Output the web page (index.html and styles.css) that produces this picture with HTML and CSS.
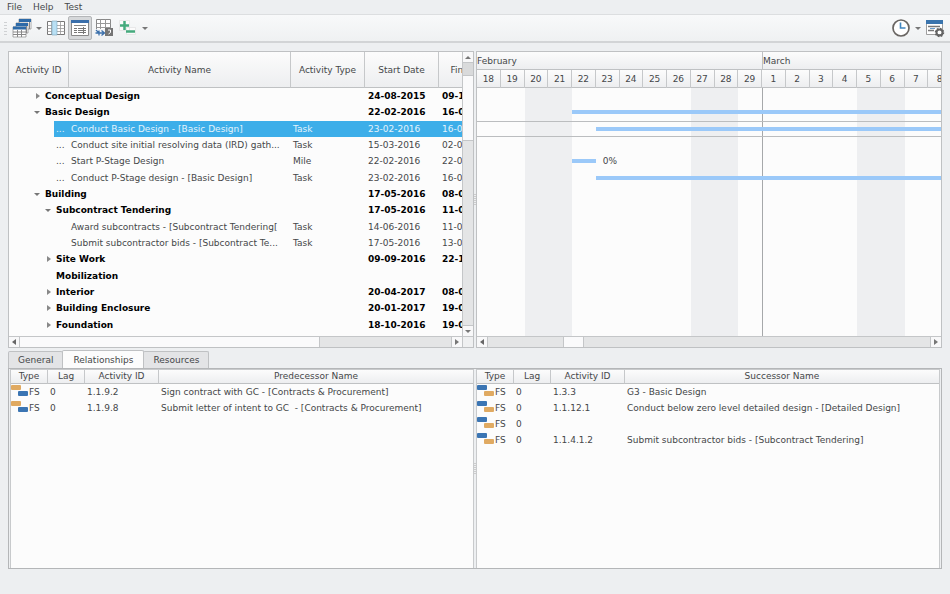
FILE: index.html
```
<!DOCTYPE html>
<html lang="en">
<head>
<meta charset="utf-8">
<title>Project schedule</title>
<link rel="stylesheet" href="styles.css">
</head>
<body>
<nav class="menubar">
  <button>File</button><button>Help</button><button>Test</button>
</nav>
<div class="toolbar">
  <span class="grip"></span>
  <button class="tool" aria-label="Windows">
    <svg width="20" height="20" viewBox="0 0 20 20"><g stroke="#777" stroke-width=".6" fill="#fff"><path d="M7 1h12v10H7z"/><path d="M4 5h12v10H4z"/><path d="M1 9h13v10H1z"/></g><path d="M7 1h12v3H7zM4 5h12v3H4zM1 8.500h13v3H1z" fill="#2d6aa8"/><path d="M1 14h13M1 16.500h13M5.500 12v7M9.500 12v7M17.500 4v7M14.500 8v7" stroke="#888" fill="none"/></svg>
  </button>
  <button class="drop" aria-label="Windows menu"><i class="down"></i></button>
  <button class="tool" aria-label="Columns">
    <svg width="20" height="20" viewBox="0 0 20 20"><path d="M1.500 3.500h17v13h-17z" fill="#fff" stroke="#777"/><path d="M1.500 7.500h17M1.500 10.500h17M1.500 13.500h17M5.500 3.500v13M14.500 3.500v13" stroke="#999" stroke-width=".8"/><path d="M6 3h5v14H6z" fill="#b9e0f4" stroke="#7ba6bd" stroke-width=".6"/></svg>
  </button>
  <button class="tool pressed" aria-label="Details">
    <svg width="20" height="20" viewBox="0 0 20 20"><path d="M1.500 2.500h17v15h-17z" fill="#fff" stroke="#888"/><path d="M1 2h18v3H1z" fill="#3a6fab"/><path d="M4 7.500h12" stroke="#888"/><path d="M4 10.500h3M4 12.500h3M4 14.500h3M8 10.500h8M8 12.500h8M8 14.500h8" stroke="#777"/><path d="M13.500 9v7" stroke="#777"/></svg>
  </button>
  <button class="tool" aria-label="Table options">
    <svg width="20" height="20" viewBox="0 0 20 20"><path d="M2.500 1.500h14v12h-14z" fill="#fff" stroke="#888"/><path d="M2.500 5.500h14M2.500 9.500h14M6.500 1.500v12M11.500 1.500v12" stroke="#999"/><path d="M1 11h11v7H1z" fill="#f4f5f6"/><path d="M2 12l3 3H1.500M5 12.500v5M5 15h5M7.500 12.500l3 2.500-3 2.500" stroke="#3a6fab" stroke-width="1.300" fill="none"/><path d="M11 10h8v8h-8z" fill="#757575"/><path d="M14 12h2.500v2.500L14.500 16" stroke="#fff" fill="none"/></svg>
  </button>
  <button class="tool" aria-label="Add or remove">
    <svg width="20" height="20" viewBox="0 0 20 20"><path d="M1.500 2.500h10v10h-10zM8.500 9.500h9v7h-9z" fill="#fbfbfb" stroke="#ddd" stroke-width=".6"/><path d="M2 7.500h9M6.500 3v9M8 13.500h9" stroke="#45aa7d" stroke-width="2.500"/></svg>
  </button>
  <button class="drop" aria-label="Add menu"><i class="down"></i></button>
  <span class="spring"></span>
  <button class="tool" aria-label="Time">
    <svg width="20" height="20" viewBox="0 0 20 20"><circle cx="10" cy="10" r="8" fill="#fff" stroke="#696562" stroke-width="1.700"/><path d="M9.500 4.500v5.500h5" stroke="#4187c0" stroke-width="1.600" fill="none"/></svg>
  </button>
  <button class="drop" aria-label="Time menu"><i class="down"></i></button>
  <button class="tool" aria-label="View settings">
    <svg width="20" height="20" viewBox="0 0 20 20"><path d="M1.500 2.500h16v14h-16z" fill="#fff" stroke="#888" stroke-width=".8"/><path d="M1 2h17v4H1z" fill="#3a74ad"/><path d="M3 8.500h12M3 12.500h6" stroke="#777" stroke-width="1.400"/><path d="M5 10.500h5" stroke="#6a9ccb"/><circle cx="14.500" cy="14.500" r="3" fill="none" stroke="#646464" stroke-width="2"/><circle cx="14.500" cy="14.500" r="4" fill="none" stroke="#646464" stroke-width="1.500" stroke-dasharray="1.600 1.540"/></svg>
  </button>
</div>

<main>
<section class="split top">
  <div class="pane">
    <div class="view">
      <div class="clip">
        <table class="tree">
          <colgroup><col class="c-id"><col class="c-name"><col class="c-std"><col class="c-std"><col class="c-std"></colgroup>
          <thead><tr><th>Activity ID</th><th>Activity Name</th><th>Activity Type</th><th>Start Date</th><th>Finish Date</th></tr></thead>
          <tbody>
            <tr class="group"><td colspan="2"><i class="right"></i>Conceptual Design</td><td></td><td>24-08-2015</td><td>09-10-2017</td></tr>
            <tr class="group"><td colspan="2"><i class="down"></i>Basic Design</td><td></td><td>22-02-2016</td><td>16-05-2016</td></tr>
            <tr class="selected"><td class="id">...</td><td>Conduct Basic Design - [Basic Design]</td><td>Task</td><td>23-02-2016</td><td>16-05-2016</td></tr>
            <tr><td class="id">...</td><td>Conduct site initial resolving data (IRD) gath...</td><td>Task</td><td>15-03-2016</td><td>02-05-2016</td></tr>
            <tr><td class="id">...</td><td>Start P-Stage Design</td><td>Mile</td><td>22-02-2016</td><td>22-02-2016</td></tr>
            <tr><td class="id">...</td><td>Conduct P-Stage design - [Basic Design]</td><td>Task</td><td>23-02-2016</td><td>16-05-2016</td></tr>
            <tr class="group"><td colspan="2"><i class="down"></i>Building</td><td></td><td>17-05-2016</td><td>08-05-2017</td></tr>
            <tr class="group sub"><td colspan="2"><i class="down"></i>Subcontract Tendering</td><td></td><td>17-05-2016</td><td>11-07-2016</td></tr>
            <tr><td class="id"></td><td>Award subcontracts - [Subcontract Tendering[</td><td>Task</td><td>14-06-2016</td><td>11-07-2016</td></tr>
            <tr><td class="id"></td><td>Submit subcontractor bids - [Subcontract Te...</td><td>Task</td><td>17-05-2016</td><td>13-06-2016</td></tr>
            <tr class="group sub"><td colspan="2"><i class="right"></i>Site Work</td><td></td><td>09-09-2016</td><td>22-11-2016</td></tr>
            <tr class="group sub"><td colspan="2"><i class="none"></i>Mobilization</td><td></td><td></td><td></td></tr>
            <tr class="group sub"><td colspan="2"><i class="right"></i>Interior</td><td></td><td>20-04-2017</td><td>08-09-2017</td></tr>
            <tr class="group sub"><td colspan="2"><i class="right"></i>Building Enclosure</td><td></td><td>20-01-2017</td><td>19-04-2017</td></tr>
            <tr class="group sub"><td colspan="2"><i class="right"></i>Foundation</td><td></td><td>18-10-2016</td><td>19-01-2017</td></tr>
          </tbody>
        </table>
      </div>
      <div class="vbar"><button aria-label="Scroll up"><i class="up"></i></button><span class="vgap"></span><span class="vthumb"></span><span class="spring"></span><button aria-label="Scroll down"><i class="down"></i></button></div>
    </div>
    <div class="hbar"><button aria-label="Scroll left"><i class="left"></i></button><span class="thumb tree-thumb"></span><span class="spring"></span><button aria-label="Scroll right"><i class="right"></i></button><span class="corner"></span></div>
  </div>
  <div class="splitter"><span class="dots"></span></div>
  <div class="pane">
    <div class="clip">
      <div class="scale months"><span class="feb">February</span><span class="mar">March</span></div>
      <div class="scale days"><span>18</span><span>19</span><span>20</span><span>21</span><span>22</span><span>23</span><span>24</span><span>25</span><span>26</span><span>27</span><span>28</span><span>29</span><span>1</span><span>2</span><span>3</span><span>4</span><span>5</span><span>6</span><span>7</span><span>8</span></div>
      <div class="chart">
        <div class="scale shade"><i class="w1"></i><i class="w2"></i><i class="w3"></i><i class="month"></i></div>
        <div class="scale lanes"><i class="current"></i><b class="bar r2 d22"></b><b class="bar r3 d23"></b><b class="bar r5 one"></b><span class="pct">0%</span><b class="bar r6 d23"></b></div>
      </div>
    </div>
    <div class="hbar"><button aria-label="Scroll left"><i class="left"></i></button><span class="chart-gap"></span><span class="thumb chart-thumb"></span><span class="spring"></span><button aria-label="Scroll right"><i class="right"></i></button></div>
  </div>
</section>

<div class="tabs" role="tablist"><button role="tab">General</button><button role="tab" class="active" aria-selected="true">Relationships</button><button role="tab">Resources</button></div>
<section class="split bottom">
  <div class="list">
    <table class="links">
      <colgroup><col class="l-s"><col class="l-s"><col class="l-id"><col></colgroup>
      <thead><tr><th>Type</th><th>Lag</th><th>Activity ID</th><th>Predecessor Name</th></tr></thead>
      <tbody>
        <tr><td class="pred"><i></i>FS</td><td>0</td><td>1.1.9.2</td><td>Sign contract with GC - [Contracts &amp; Procurement]</td></tr>
        <tr><td class="pred"><i></i>FS</td><td>0</td><td>1.1.9.8</td><td>Submit letter of intent to GC&nbsp; - [Contracts &amp; Procurement]</td></tr>
      </tbody>
    </table>
  </div>
  <div class="splitter"><span class="dots"></span></div>
  <div class="list">
    <table class="links">
      <colgroup><col class="l-s"><col class="l-s"><col class="l-id"><col></colgroup>
      <thead><tr><th>Type</th><th>Lag</th><th>Activity ID</th><th>Successor Name</th></tr></thead>
      <tbody>
        <tr><td class="succ"><i></i>FS</td><td>0</td><td>1.3.3</td><td>G3 - Basic Design</td></tr>
        <tr><td class="succ"><i></i>FS</td><td>0</td><td>1.1.12.1</td><td>Conduct below zero level detailed design - [Detailed Design]</td></tr>
        <tr><td class="succ"><i></i>FS</td><td>0</td><td></td><td></td></tr>
        <tr><td class="succ"><i></i>FS</td><td>0</td><td>1.1.4.1.2</td><td>Submit subcontractor bids - [Subcontract Tendering]</td></tr>
      </tbody>
    </table>
  </div>
</section>
</main>
</body>
</html>
```
FILE: styles.css
```
* { box-sizing: border-box; }
html, body { height: 100%; }
body {
  margin: 0;
  display: flex;
  flex-direction: column;
  background: #edeff1;
  color: #454749;
  font: 9px/14px "DejaVu Sans", sans-serif;
  overflow: hidden;
}
button { font: inherit; color: inherit; background: none; border: 0; padding: 0; margin: 0; }
.spring { flex: 1; }

.menubar { display: flex; gap: 11px; padding: 0 7px; height: 14px; }

.toolbar {
  display: flex;
  align-items: center;
  height: 29px;
  padding: 0 3px 0 4px;
  border-top: 1px solid #dcdee0;
  border-bottom: 2px solid #d2d4d6;
  background: linear-gradient(#f8f9fa, #eff1f2);
}
.grip { width: 3px; height: 14px; margin-right: 3px; background: radial-gradient(circle, #cfd1d3 30%, transparent 40%) 0 0 / 2px 3px; }
.tool { display: flex; align-items: center; justify-content: center; width: 24px; height: 24px; border: 1px solid transparent; border-radius: 2px; }
.tool svg { flex: none; }
.pressed { background: #d6d8da; border-color: #b4b6b8; }
.drop { display: flex; align-items: center; justify-content: center; width: 10px; height: 24px; }

.down, .up, .left, .right { display: inline-block; width: 0; height: 0; border: 3px solid transparent; flex: none; }
.down { border-top-color: #777; border-bottom-width: 0; }
.up { border-bottom-color: #777; border-top-width: 0; }
.left { border-right: 4px solid #666; border-left-width: 0; }
.right { border-left: 4px solid #777; border-right-width: 0; }

main { flex: 1; display: flex; flex-direction: column; padding: 8px 8px 25px; min-height: 0; }
.split { display: flex; }
.splitter { width: 2px; display: flex; align-items: center; justify-content: center; }
.dots { width: 2px; height: 12px; background: repeating-linear-gradient(#ccc 0 1px, transparent 1px 2px); }
.pane { flex: 1 1 0; min-width: 0; border: 1px solid #bfc1c3; background: #fcfcfc; }
.view { display: flex; }
.clip { flex: 1; min-width: 0; overflow: hidden; }

table { border-collapse: separate; border-spacing: 0; table-layout: fixed; }
th { font-weight: normal; padding: 0; text-align: center; border-right: 1px solid #c6c8ca; border-bottom: 1px solid #bfc1c3; background: linear-gradient(#fcfcfc, #edeef0); white-space: nowrap; }
td { padding: 0 0 0 2px; white-space: nowrap; overflow: hidden; }

.tree { width: 504px; height: 281px; margin-bottom: 3px; }
.tree th { height: 36px; }
.c-id { width: 60px; }
.c-name { width: 222px; }
.c-std { width: 74px; }
.tree td.id { padding-left: 47px; }
.tree td:nth-last-child(-n+2) { padding-left: 3px; }
.group td { font-weight: bold; color: #000; }
.group td[colspan] { padding-left: 25px; }
.sub td[colspan] { padding-left: 36px; }
.group td i { margin-right: 5px; vertical-align: 1px; }
.group td i.right { margin: 0 5px 0 2px; vertical-align: 0; border-left-color: #888; }
.none { display: inline-block; width: 6px; }
.selected td { background: #3daee9; color: #e3f3fc; }
.selected td.id { background: linear-gradient(to right, #fcfcfc 45px, #3daee9 45px); }

.vbar { width: 11px; display: flex; flex-direction: column; background: #e4e5e6; border-left: 1px solid #c4c6c8; }
.vbar button, .hbar button { display: flex; align-items: center; justify-content: center; flex: none; background: #f8f8f9; }
.vbar button { height: 11px; border: 0 solid #c4c6c8; border-width: 0 0 1px; }
.vbar button:last-child { border-width: 1px 0 0; }
.vgap { height: 12px; background: #d9dadb; }
.vthumb { height: 66px; background: #fafafb; border: 0 solid #c4c6c8; border-width: 1px 0; }
.hbar { display: flex; height: 11px; background: #e4e5e6; border-top: 1px solid #c4c6c8; }
.hbar button { width: 11px; border: 0 solid #c4c6c8; border-width: 0 1px 0 0; }
.hbar .spring + button { border-width: 0 0 0 1px; }
.thumb { background: #fafafb; border-right: 1px solid #c4c6c8; }
.tree-thumb { width: 300px; }
.corner { width: 11px; background: #eff0f1; border-left: 1px solid #c4c6c8; }
.chart-gap { width: 75px; }
.chart-thumb { width: 21px; border-left: 1px solid #c4c6c8; }

.scale { display: grid; grid-template-columns: repeat(20, 1fr); width: 475px; min-width: 100%; }
.months, .days { height: 18px; border-bottom: 1px solid #bfc1c3; background: linear-gradient(#fcfcfc, #edeef0); line-height: 18px; }
.feb { grid-column: 1 / 13; }
.mar { grid-column: 13 / -1; border-left: 1px solid #bfc1c3; }
.days span { border-right: 1px solid #c6c8ca; text-align: center; }
.chart { display: grid; height: 248px; }
.shade, .lanes { grid-area: 1 / 1; }
.shade i { grid-row: 1; background: #eeeff1; }
.w1 { grid-column: 3 / 5; }
.w2 { grid-column: 10 / 12; }
.w3 { grid-column: 17 / 19; }
.shade .month { grid-column: 13; background: none; border-left: 1px solid #a6a8aa; }
.lanes { grid-template-rows: repeat(15, 1fr); height: 245px; }
.current { grid-area: 3 / 1 / 4 / -1; border: 0 solid #bbbdbf; border-width: 1px 0; }
.bar { height: 4px; align-self: center; background: #9bc9f9; }
.r2 { grid-row: 2; }
.r3 { grid-row: 3; }
.r5 { grid-row: 5; }
.r6 { grid-row: 6; }
.d22 { grid-column: 5 / -1; }
.d23 { grid-column: 6 / -1; }
.one { grid-column: 5; }
.pct { grid-area: 5 / 6; padding-left: 7px; align-self: center; }

.tabs { display: flex; align-items: flex-end; margin-top: 2px; height: 18px; }
.tabs button { height: 17px; padding: 0 9px; border: 1px solid #bfc1c3; border-bottom: 0; border-radius: 2px 2px 0 0; background: #e3e4e6; }
.tabs .active { height: 18px; background: #fcfcfc; margin: 0 -1px; padding: 0 10px; }
.bottom { flex: 1; border: 1px solid #b4b6b8; padding: 0 1px; min-height: 0; }
.list { flex: 1 1 0; min-width: 0; border: 1px solid #c8cacc; border-bottom: 0; background: #fcfcfc; }
.links { width: 100%; }
.links th { height: 14px; line-height: 13px; }
.links td { height: 16px; }
.links th:last-child { border-right: 0; }
.links td:first-child { padding: 0; }
.l-s { width: 37px; }
.l-id { width: 74px; }
.links i { display: inline-block; width: 17px; height: 11px; margin-right: 1px; vertical-align: top; }
.links i::before, .links i::after { content: ""; display: block; width: 10px; height: 5px; border-radius: 1px; background: #3b75b3; }
.links i::after { margin: 1px 0 0 7px; background: #e0aa62; }
.links .pred i::before { background: #e0aa62; }
.links .pred i::after { background: #3b75b3; }
```
